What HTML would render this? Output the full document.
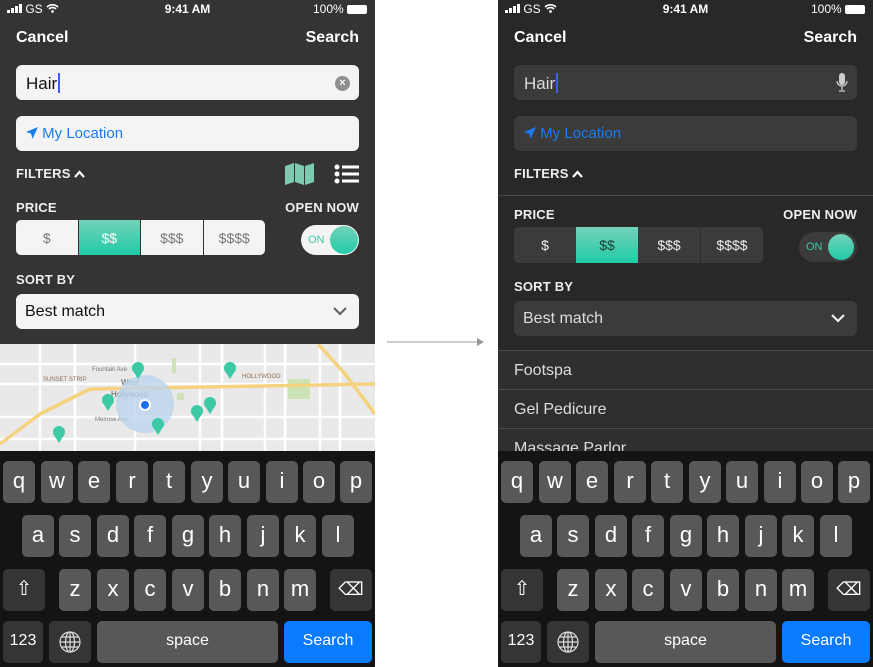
<!DOCTYPE html>
<html><head><meta charset="utf-8"><style>
*{box-sizing:border-box;margin:0;padding:0}
body{width:873px;height:667px;background:#fff;position:relative;overflow:hidden;font-family:"Liberation Sans",sans-serif}
.ph{position:absolute;top:0;width:375px;height:667px;overflow:hidden}
.a{position:absolute}
.st{font-size:12px;color:#fff;top:2px}
.nav{font-size:16px;font-weight:bold;color:#fff;top:29px}
.fld{left:16px;width:343px;height:35px;border-radius:6px}
.lbl{font-size:13px;font-weight:bold;color:#eee;letter-spacing:.2px}
.seg{left:16px;width:249px;height:36px;border-radius:5px;overflow:hidden;display:flex}
.seg div{flex:1;display:flex;align-items:center;justify-content:center;font-size:14px}
.sel{background:linear-gradient(#72d2b8,#21cba8)}
.kb{left:0;top:451px;width:375px;height:216px;background:#141414}
.k{position:absolute;width:32px;height:42px;background:#585858;border-radius:5px;color:#fff;font-size:22px;text-align:center;line-height:40px}
.k.d{background:#353535}
</style></head><body>

<!-- LEFT PHONE -->
<div class="ph" style="left:0;background:#343434">
 <div class="a st" style="left:7px"><svg width="15" height="9" viewBox="0 0 15 9" style="vertical-align:0"><g fill="#fff"><rect x="0" y="6" width="3" height="3"/><rect x="4" y="4" width="3" height="5"/><rect x="8" y="2" width="3" height="7"/><rect x="12" y="0" width="3" height="9"/></g></svg> GS <svg width="13" height="10" viewBox="0 0 13 10"><path d="M1 4a8 8 0 0 1 11 0M3 6a5 5 0 0 1 7 0" stroke="#fff" stroke-width="1.6" fill="none"/><circle cx="6.5" cy="8.5" r="1.4" fill="#fff"/></svg></div>
 <div class="a st" style="left:0;width:375px;text-align:center;font-weight:bold">9:41 AM</div>
 <div class="a st" style="right:8px">100% <span style="display:inline-block;width:20px;height:9px;background:#fff;border-radius:2px;vertical-align:-1px"></span></div>
 <div class="a nav" style="left:16px">Cancel</div>
 <div class="a nav" style="right:16px">Search</div>
 <div class="a fld" style="top:65px;background:#f4f4f4"></div>
 <div class="a" style="left:26px;top:73px;font-size:17px;color:#111">Hair<span style="display:inline-block;width:2px;height:20px;background:#3d5cff;vertical-align:-4px;margin-left:1px"></span></div>
 <div class="a" style="left:335px;top:76px;width:15px;height:15px;border-radius:50%;background:#8e8e8e;color:#fff;font-size:11px;text-align:center;line-height:15px;font-weight:bold">×</div>
 <div class="a fld" style="top:116px;background:#f4f4f4"></div>
 <div class="a" style="left:26px;top:125px;font-size:15px;color:#1a7cf0"><svg width="12" height="12" viewBox="0 0 12 12" style="vertical-align:-1px"><path d="M12 0L0 5l5 1.5L6.5 12z" fill="#1a7cf0"/></svg> My Location</div>
 <div class="a lbl" style="left:16px;top:166px">FILTERS <svg width="11" height="8" viewBox="0 0 11 8"><path d="M1 7l4.5-5 4.5 5" stroke="#fff" stroke-width="2.2" fill="none"/></svg></div>
 <svg class="a" style="left:285px;top:163px" width="29" height="22" viewBox="0 0 29 22"><path d="M0 3l9-3v19l-9 3zM10 0l9 3v19l-9-3zM20 3l9-3v19l-9 3z" fill="#7ccbb0"/></svg>
 <svg class="a" style="left:334px;top:164px" width="25" height="20" viewBox="0 0 25 20"><g fill="#fff"><circle cx="3" cy="3" r="2.5"/><circle cx="3" cy="10" r="2.5"/><circle cx="3" cy="17" r="2.5"/><rect x="8" y="1.5" width="17" height="3"/><rect x="8" y="8.5" width="17" height="3"/><rect x="8" y="15.5" width="17" height="3"/></g></svg>
 <div class="a lbl" style="left:16px;top:200px">PRICE</div>
 <div class="a lbl" style="right:16px;top:200px">OPEN NOW</div>
 <div class="a seg" style="top:220px;height:35px;background:#f4f4f4;color:#777">
  <div>$</div><div class="sel" style="color:#fff;border-left:1px solid #333">$$</div><div style="border-left:1px solid #333">$$$</div><div style="border-left:1px solid #333">$$$$</div></div>
 <div class="a" style="left:301px;top:225px;width:58px;height:30px;border-radius:15px;background:#f4f4f4"></div>
 <div class="a" style="left:308px;top:234px;font-size:11px;color:#3fc9a8">ON</div>
 <div class="a" style="left:330px;top:226px;width:28px;height:28px;border-radius:50%;background:linear-gradient(#72d2b8,#21cba8)"></div>
 <div class="a lbl" style="left:16px;top:272px">SORT BY</div>
 <div class="a fld" style="top:294px;background:#f4f4f4"></div>
 <div class="a" style="left:25px;top:303px;font-size:16px;color:#111">Best match</div>
 <svg class="a" style="left:333px;top:307px" width="14" height="9" viewBox="0 0 14 9"><path d="M1 1l6 6 6-6" stroke="#666" stroke-width="2.2" fill="none"/></svg>
 <!-- map -->
 <svg class="a" style="left:0;top:344px" width="375" height="107" viewBox="0 0 375 107">
  <rect width="375" height="107" fill="#e9e9e9"/>
  <g stroke="#fff" stroke-width="2.5" fill="none">
   <path d="M0 40H375M0 73H375M0 95H375M40 0V107M75 0V107M135 0V107M200 0V107M222 0V107M265 0V107M285 0V107M320 0V107M340 0V107M0 20H375"/>
  </g>
  <rect x="288" y="35" width="22" height="20" fill="#cde3b5"/>
  <rect x="172" y="14" width="4" height="15" fill="#cde3b5"/>
  <rect x="177" y="49" width="7" height="7" fill="#cde3b5"/>
  <path d="M0 100L40 70 90 45 375 40" stroke="#f5d27e" stroke-width="3.5" fill="none"/>
  <path d="M318 0L345 30 375 70" stroke="#f5d27e" stroke-width="3.5" fill="none"/>
  <text x="43" y="37" font-size="6" fill="#8a6d55" font-family="Liberation Sans">SUNSET STRIP</text>
  <text x="92" y="27" font-size="6" fill="#777" font-family="Liberation Sans">Fountain Ave</text>
  <text x="242" y="34" font-size="6" fill="#8a6d55" font-family="Liberation Sans">HOLLYWOOD</text>
  <text x="121" y="41" font-size="8" fill="#555" font-family="Liberation Sans">West</text>
  <text x="111" y="53" font-size="8" fill="#555" font-family="Liberation Sans">Hollywood</text>
  <text x="95" y="77" font-size="6" fill="#777" font-family="Liberation Sans">Melrose Ave</text>
  <circle cx="145" cy="60" r="29" fill="#bcd4ee" opacity=".8"/>
  <circle cx="145" cy="61" r="6" fill="#fff"/><circle cx="145" cy="61" r="4" fill="#1a6ff0"/>
  <g fill="#3cc9a4">
   <circle cx="138" cy="24" r="6"/><path d="M133 27l5 8 5-8z"/>
   <circle cx="230" cy="24" r="6"/><path d="M225 27l5 8 5-8z"/>
   <circle cx="108" cy="56" r="6"/><path d="M103 59l5 8 5-8z"/>
   <circle cx="210" cy="59" r="6"/><path d="M205 62l5 8 5-8z"/>
   <circle cx="197" cy="67" r="6"/><path d="M192 70l5 8 5-8z"/>
   <circle cx="158" cy="80" r="6"/><path d="M153 83l5 8 5-8z"/>
   <circle cx="59" cy="88" r="6"/><path d="M54 91l5 8 5-8z"/>
  </g>
 </svg>
 <div class="a kb">
  <div class="k" style="left:3px;top:10px">q</div><div class="k" style="left:41px;top:10px">w</div><div class="k" style="left:78px;top:10px">e</div><div class="k" style="left:116px;top:10px">r</div><div class="k" style="left:153px;top:10px">t</div><div class="k" style="left:191px;top:10px">y</div><div class="k" style="left:228px;top:10px">u</div><div class="k" style="left:266px;top:10px">i</div><div class="k" style="left:303px;top:10px">o</div><div class="k" style="left:340px;top:10px">p</div>
  <div class="k" style="left:22px;top:64px">a</div><div class="k" style="left:59px;top:64px">s</div><div class="k" style="left:97px;top:64px">d</div><div class="k" style="left:134px;top:64px">f</div><div class="k" style="left:172px;top:64px">g</div><div class="k" style="left:209px;top:64px">h</div><div class="k" style="left:247px;top:64px">j</div><div class="k" style="left:284px;top:64px">k</div><div class="k" style="left:322px;top:64px">l</div>
  <div class="k d" style="left:3px;top:118px;width:42px;font-size:20px">⇧</div>
  <div class="k" style="left:59px;top:118px">z</div><div class="k" style="left:97px;top:118px">x</div><div class="k" style="left:134px;top:118px">c</div><div class="k" style="left:172px;top:118px">v</div><div class="k" style="left:209px;top:118px">b</div><div class="k" style="left:247px;top:118px">n</div><div class="k" style="left:284px;top:118px">m</div>
  <div class="k d" style="left:330px;top:118px;width:42px;font-size:18px">⌫</div>
  <div class="k d" style="left:3px;top:170px;width:40px;font-size:16px">123</div>
  <div class="k d" style="left:49px;top:170px;width:42px"><svg width="22" height="22" viewBox="0 0 22 22" style="margin-top:10px"><g stroke="#ddd" stroke-width="1.2" fill="none"><circle cx="11" cy="11" r="10"/><ellipse cx="11" cy="11" rx="4.5" ry="10"/><path d="M11 1v20M1 11h20M3 6h16M3 16h16"/></g></svg></div>
  <div class="k" style="left:97px;top:170px;width:181px;font-size:16px">space</div>
  <div class="k" style="left:284px;top:170px;width:88px;font-size:16px;background:#0a7aff">Search</div>
 </div>
</div>

<!-- ARROW -->
<svg class="a" style="left:385px;top:336px" width="100" height="12"><path d="M2 6H92" stroke="#999" stroke-width="1"/><path d="M92 2l7 4-7 4z" fill="#999"/></svg>

<!-- RIGHT PHONE -->
<div class="ph" style="left:498px;background:#282828">
 <div class="a st" style="left:7px"><svg width="15" height="9" viewBox="0 0 15 9" style="vertical-align:0"><g fill="#fff"><rect x="0" y="6" width="3" height="3"/><rect x="4" y="4" width="3" height="5"/><rect x="8" y="2" width="3" height="7"/><rect x="12" y="0" width="3" height="9"/></g></svg> GS <svg width="13" height="10" viewBox="0 0 13 10"><path d="M1 4a8 8 0 0 1 11 0M3 6a5 5 0 0 1 7 0" stroke="#fff" stroke-width="1.6" fill="none"/><circle cx="6.5" cy="8.5" r="1.4" fill="#fff"/></svg></div>
 <div class="a st" style="left:0;width:375px;text-align:center;font-weight:bold">9:41 AM</div>
 <div class="a st" style="right:8px">100% <span style="display:inline-block;width:20px;height:9px;background:#fff;border-radius:2px;vertical-align:-1px"></span></div>
 <div class="a nav" style="left:16px">Cancel</div>
 <div class="a nav" style="right:16px">Search</div>
 <div class="a fld" style="top:65px;background:#3b3b3b"></div>
 <div class="a" style="left:26px;top:73px;font-size:17px;color:#ddd">Hair<span style="display:inline-block;width:2px;height:20px;background:#3d5cff;vertical-align:-4px;margin-left:1px"></span></div>
 <svg class="a" style="left:338px;top:72px" width="12" height="21" viewBox="0 0 12 21"><rect x="3" y="1" width="6" height="12" rx="3" fill="#ccc"/><path d="M1 9a5 5 0 0 0 10 0M6 14v4M3 19h6" stroke="#ccc" stroke-width="1.3" fill="none"/></svg>
 <div class="a fld" style="top:116px;background:#3b3b3b"></div>
 <div class="a" style="left:26px;top:125px;font-size:15px;color:#1a7cf0"><svg width="12" height="12" viewBox="0 0 12 12" style="vertical-align:-1px"><path d="M12 0L0 5l5 1.5L6.5 12z" fill="#1a7cf0"/></svg> My Location</div>
 <div class="a lbl" style="left:16px;top:166px">FILTERS <svg width="11" height="8" viewBox="0 0 11 8"><path d="M1 7l4.5-5 4.5 5" stroke="#fff" stroke-width="2.2" fill="none"/></svg></div>
 <div class="a" style="left:0;top:195px;width:375px;height:1px;background:#4a4a4a"></div>
 <div class="a lbl" style="left:16px;top:207px">PRICE</div>
 <div class="a lbl" style="right:16px;top:207px">OPEN NOW</div>
 <div class="a seg" style="top:227px;background:#3b3b3b;color:#eee">
  <div>$</div><div class="sel" style="color:#1c3d36">$$</div><div>$$$</div><div style="border-left:1px solid #2a2a2a">$$$$</div></div>
 <div class="a" style="left:301px;top:232px;width:58px;height:30px;border-radius:15px;background:#3b3b3b"></div>
 <div class="a" style="left:308px;top:241px;font-size:11px;color:#3fc9a8">ON</div>
 <div class="a" style="left:330px;top:234px;width:26px;height:26px;border-radius:50%;background:linear-gradient(#72d2b8,#21cba8)"></div>
 <div class="a lbl" style="left:16px;top:279px">SORT BY</div>
 <div class="a fld" style="top:301px;background:#3b3b3b"></div>
 <div class="a" style="left:25px;top:310px;font-size:16px;color:#ddd">Best match</div>
 <svg class="a" style="left:333px;top:314px" width="14" height="9" viewBox="0 0 14 9"><path d="M1 1l6 6 6-6" stroke="#eee" stroke-width="2.2" fill="none"/></svg>
 <div class="a" style="left:0;top:350px;width:375px;height:101px;background:#2f2f2f"></div>
 <div class="a" style="left:0;top:350px;width:375px;height:1px;background:#4a4a4a"></div>
 <div class="a" style="left:16px;top:362px;font-size:16px;color:#ddd">Footspa</div>
 <div class="a" style="left:0;top:389px;width:375px;height:1px;background:#4a4a4a"></div>
 <div class="a" style="left:16px;top:401px;font-size:16px;color:#ddd">Gel Pedicure</div>
 <div class="a" style="left:0;top:428px;width:375px;height:1px;background:#4a4a4a"></div>
 <div class="a" style="left:16px;top:440px;font-size:16px;color:#ddd">Massage Parlor</div>
 <div class="a kb">
  <div class="k" style="left:3px;top:10px">q</div><div class="k" style="left:41px;top:10px">w</div><div class="k" style="left:78px;top:10px">e</div><div class="k" style="left:116px;top:10px">r</div><div class="k" style="left:153px;top:10px">t</div><div class="k" style="left:191px;top:10px">y</div><div class="k" style="left:228px;top:10px">u</div><div class="k" style="left:266px;top:10px">i</div><div class="k" style="left:303px;top:10px">o</div><div class="k" style="left:340px;top:10px">p</div>
  <div class="k" style="left:22px;top:64px">a</div><div class="k" style="left:59px;top:64px">s</div><div class="k" style="left:97px;top:64px">d</div><div class="k" style="left:134px;top:64px">f</div><div class="k" style="left:172px;top:64px">g</div><div class="k" style="left:209px;top:64px">h</div><div class="k" style="left:247px;top:64px">j</div><div class="k" style="left:284px;top:64px">k</div><div class="k" style="left:322px;top:64px">l</div>
  <div class="k d" style="left:3px;top:118px;width:42px;font-size:20px">⇧</div>
  <div class="k" style="left:59px;top:118px">z</div><div class="k" style="left:97px;top:118px">x</div><div class="k" style="left:134px;top:118px">c</div><div class="k" style="left:172px;top:118px">v</div><div class="k" style="left:209px;top:118px">b</div><div class="k" style="left:247px;top:118px">n</div><div class="k" style="left:284px;top:118px">m</div>
  <div class="k d" style="left:330px;top:118px;width:42px;font-size:18px">⌫</div>
  <div class="k d" style="left:3px;top:170px;width:40px;font-size:16px">123</div>
  <div class="k d" style="left:49px;top:170px;width:42px"><svg width="22" height="22" viewBox="0 0 22 22" style="margin-top:10px"><g stroke="#ddd" stroke-width="1.2" fill="none"><circle cx="11" cy="11" r="10"/><ellipse cx="11" cy="11" rx="4.5" ry="10"/><path d="M11 1v20M1 11h20M3 6h16M3 16h16"/></g></svg></div>
  <div class="k" style="left:97px;top:170px;width:181px;font-size:16px">space</div>
  <div class="k" style="left:284px;top:170px;width:88px;font-size:16px;background:#0a7aff">Search</div>
 </div>
</div>
</body></html>
